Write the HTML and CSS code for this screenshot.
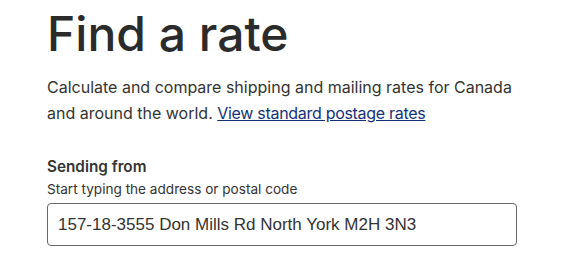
FILE: index.html
```html
<!DOCTYPE html>
<html lang="en">
<head>
    <meta charset="UTF-8">
    <meta name="viewport" content="width=device-width, initial-scale=1.0">
    <title>Find a rate</title>
    <link rel="stylesheet" href="styles.css">
</head>
<body>
    <main class="page">
        <h1 class="title">Find a rate</h1>
        <p class="intro">Calculate and compare shipping and mailing rates for Canada and around the world. <a href="#rates">View standard postage rates</a></p>
        <div class="field">
            <label class="field-label" for="from">Sending from</label>
            <div class="field-hint">Start typing the address or postal code</div>
            <input class="field-input" id="from" type="text" value="157-18-3555 Don Mills Rd North York M2H 3N3">
        </div>
    </main>
</body>
</html>
```

FILE: styles.css
```css
body {
    margin: 0;
    padding: 0;
    background-color: #fff;
    font-family: Inter, "Noto Sans", sans-serif;
    color: #333;
}
.page {
    padding: 0 48px 0 47px;
}
.title {
    margin: 0;
    padding-top: 6px;
    font-size: 48px;
    font-weight: 500;
    line-height: 56px;
    color: #2b2b2b;
}
.intro {
    margin: 12px 0 0;
    font-size: 16px;
    line-height: 26px;
    max-width: 500px;
}
.intro a {
    color: #13317a;
    letter-spacing: -0.3px;
}
.field {
    margin-top: 31px;
}
.field-label {
    display: block;
    font-size: 15.3px;
    font-weight: 600;
    line-height: 20px;
}
.field-hint {
    margin-top: 3px;
    font-size: 13.6px;
    line-height: 18px;
}
.field-input {
    display: block;
    box-sizing: border-box;
    margin-top: 5px;
    width: 470px;
    height: 43px;
    padding: 0 10px;
    border: 1px solid #666;
    border-radius: 4px;
    font-family: "Liberation Sans", Arial, sans-serif;
    font-size: 17px;
    color: #333;
}
```
